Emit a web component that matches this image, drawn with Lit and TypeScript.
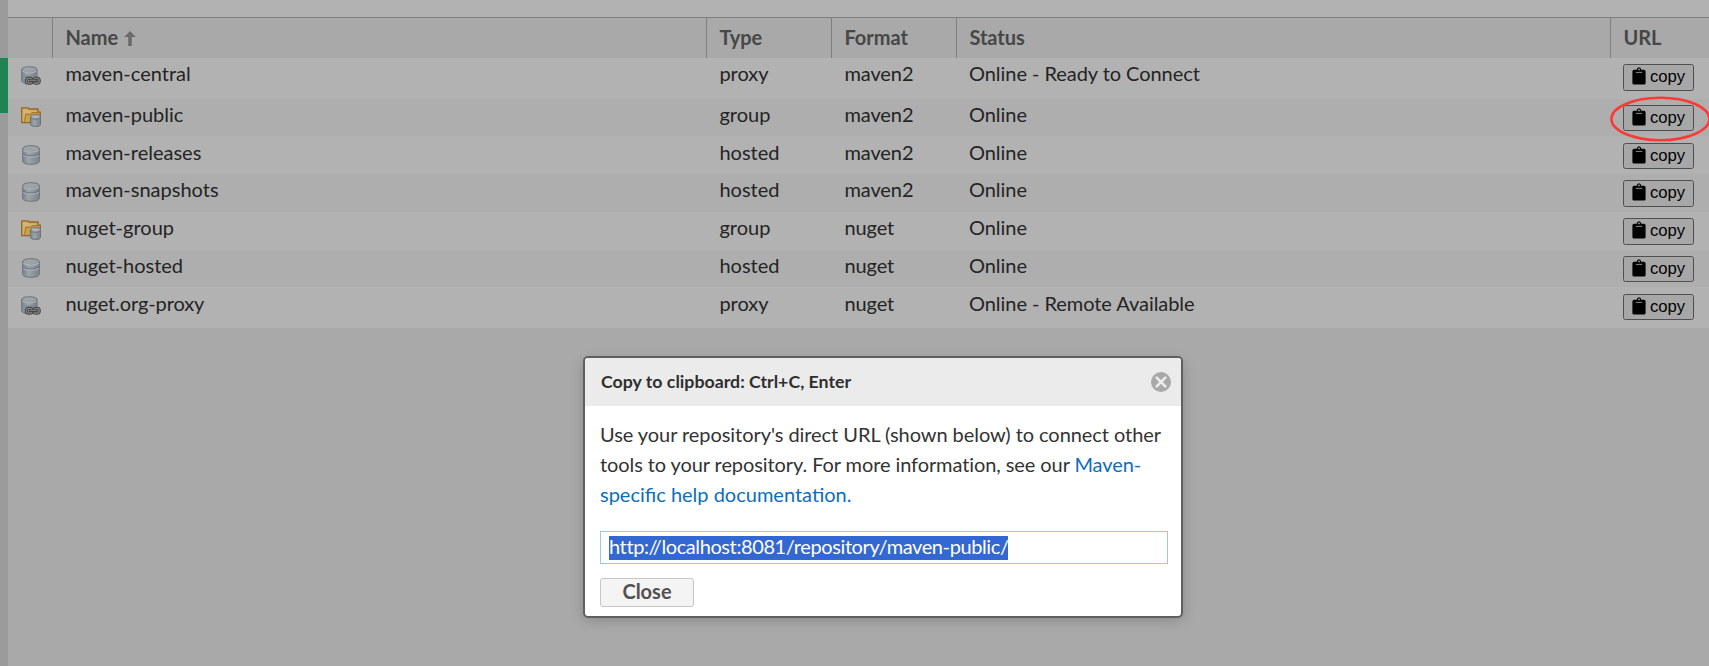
import { LitElement, html, css, svg } from "lit";
import { customElement, property } from "lit/decorators.js";

type Kind = "proxy" | "group" | "hosted";
interface Repo {
  name: string;
  type: Kind;
  format: string;
  status: string;
  size: string;
}

const REPOS: Repo[] = [
  { name: "maven-central", type: "proxy", format: "maven2", status: "Online - Ready to Connect", size: "tall" },
  { name: "maven-public", type: "group", format: "maven2", status: "Online", size: "short" },
  { name: "maven-releases", type: "hosted", format: "maven2", status: "Online", size: "low" },
  { name: "maven-snapshots", type: "hosted", format: "maven2", status: "Online", size: "mid" },
  { name: "nuget-group", type: "group", format: "nuget", status: "Online", size: "mid" },
  { name: "nuget-hosted", type: "hosted", format: "nuget", status: "Online", size: "short" },
  { name: "nuget.org-proxy", type: "proxy", format: "nuget", status: "Online - Remote Available", size: "tall last" },
];

@customElement("repo-icon")
class RepoIcon extends LitElement {
  @property() kind: Kind = "hosted";

  static styles = css`
    :host { display: block; width: 20px; height: 20px; }
    svg { display: block; }
  `;

  private hosted() {
    return svg`
      <path d="M1.6 3.6 Q2.4 .7 10 .7 T18.4 3.6 V16.4 Q17.6 19.3 10 19.3 T1.6 16.4Z" fill="url(#g)" stroke="#70777d"/>
      <ellipse cx="10" cy="3.7" rx="7.4" ry="2.3" fill="#9ca4aa"/>
      <path d="M2.3 5.2 Q5 7.2 10 7.2 T17.7 5.2" fill="none" stroke="#b1b7bc" stroke-width="1.1"/>
      <path d="M1.8 9 Q5 11 10 11 T18.2 9" fill="none" stroke="#6f777e" stroke-width="1.2"/>
      <path d="M2.2 10.4 Q5 12.2 10 12.2 T17.8 10.4" fill="none" stroke="#adb4b9" stroke-width="1"/>`;
  }

  private proxy() {
    return svg`
      <path d="M.6 3.4 Q1.4 .7 8.3 .7 T16 3.4 V14.9 Q15 17.7 8.3 17.7 T.6 14.9Z" fill="url(#g)" stroke="#70777d"/>
      <ellipse cx="8.3" cy="3.5" rx="6.7" ry="2.1" fill="#9ca4aa"/>
      <path d="M1.3 5.1 Q4 7 8.3 7 T15.3 5.1" fill="none" stroke="#b1b7bc"/>
      <path d="M1 9 Q4 10.4 8.3 10.4 T15.6 9" fill="none" stroke="#7c848a"/>
      <g fill="none" stroke="#444" stroke-width="3.2">
        <rect x="5.4" y="12.4" width="5.6" height="4.8" rx="2.2"/>
        <rect x="13" y="12.4" width="5.2" height="4.8" rx="2.2"/>
      </g>
      <g fill="none" stroke="#858585" stroke-width="1.2">
        <rect x="5.4" y="12.3" width="5.6" height="4.8" rx="2.2"/>
        <rect x="13" y="12.3" width="5.2" height="4.8" rx="2.2"/>
      </g>
      <path d="M8.5 14.8 H15.5" stroke="#3c3c3c" stroke-width="2.4"/>
      <path d="M9 14.6 H15" stroke="#8a8a8a" stroke-width=".9"/>`;
  }

  private group() {
    return svg`
      <path d="M.7 15.6 V.9 H7.2 L8.2 2 H17 V5.2 H19.3 V15.6Z" fill="#c9a14b" stroke="#94682c" stroke-width="1.3"/>
      <path d="M1.8 14.5 V2.3 H6.4 L7.6 3.4 H15.8 V5 H10.5 L9.3 6.6 H4.2 V14.5Z" fill="#d2b574"/>
      <path d="M3.6 14.6 L4.6 7.3 H9.8 L11 5.7 H18.3" fill="none" stroke="#a0722c" stroke-width="1"/>
      <path d="M9.5 9.6 Q10 7.6 14.7 7.6 T19.6 9.6 V17.6 Q19 19.5 14.7 19.5 T9.5 17.6Z" fill="url(#g)" stroke="#6a7178"/>
      <ellipse cx="14.6" cy="9.7" rx="4.2" ry="1.4" fill="#aab1b7"/>
      <path d="M10 11.2 Q12 12.4 14.7 12.4 T19.2 11.2" fill="none" stroke="#747c83"/>`;
  }

  render() {
    const art = this.kind === "hosted" ? this.hosted() : this.kind === "proxy" ? this.proxy() : this.group();
    return html`<svg width="20" height="20" viewBox="0 0 20 20">
      <defs><linearGradient id="g"><stop offset="0" stop-color="#7c858c"/><stop offset=".35" stop-color="#9ba4aa"/><stop offset="1" stop-color="#7b848b"/></linearGradient></defs>
      ${art}
    </svg>`;
  }
}

@customElement("copy-button")
class CopyButton extends LitElement {
  static styles = css`
    :host { display: block; height: 27px; }
    button {
      box-sizing: border-box; width: 71px; height: 100%; margin: 0; padding: 0 0 0 8px;
      display: flex; align-items: flex-start; gap: 4px;
      border: 1px solid #505050; border-radius: 2.5px; background: #a7a7a7; color: #000;
      font: 16.67px/24px "Liberation Sans", Arial, sans-serif;
    }
    svg { display: block; margin-top: 2px; flex: none; }
  `;

  render() {
    return html`<button>
      <svg width="14" height="18" viewBox="0 0 14 18">
        <path d="M2 2.8 H4.7 Q5 .3 7 .3 T9.3 2.8 H12 Q13.6 2.8 13.6 4.4 V16 Q13.6 17.5 12 17.5 H2 Q.4 17.5 .4 16 V4.4 Q.4 2.8 2 2.8Z"/>
        <circle cx="7" cy="2.4" r=".9" fill="#a7a7a7"/>
        <path d="M3.8 5.4 H10.2" stroke="#8a8a8a" stroke-width="1"/>
      </svg>
      <span>copy</span>
    </button>`;
  }
}

@customElement("app-root")
class AppRoot extends LitElement {
  static styles = css`
    :host {
      display: block; width: 1709px; height: 666px; overflow: hidden; position: relative;
      font: 20px/24px Lato, "Open Sans", sans-serif; letter-spacing: -0.09px; color: #242424;
    }
    .page { display: flex; height: 100%; background: #a9a9a9; }
    .rail { width: 8px; background: #9b9b9b; padding-top: 58px; box-sizing: border-box; flex: none; }
    .active { height: 55px; background: #1f8352; }
    .main { flex: 1; }
    .toolbar { height: 17px; background: #b2b2b2; }
    .line { display: grid; grid-template-columns: 44px 654px 125px 125px 654px 1fr; }
    .head {
      height: 41px; box-sizing: border-box; border-top: 1px solid #7f7f7f; background: #a9a9a9;
      font-weight: 700; color: #474747; letter-spacing: 0;
    }
    .head > div { padding: 7px 0 0 12.4px; border-left: 1px solid #7f7f7f; display: flex; }
    .head > div:first-child { border: 0; }
    .arrow { margin: 6px 0 0 6px; }
    .row { background: #b2b2b2; height: 38px; }
    .row:nth-child(odd) { background: #aeaeae; }
    .row > div { padding: 3px 0 0 13.4px; }
    .row > .type { letter-spacing: 0; }
    .row > .name { letter-spacing: 0; }
    .row > .icon { padding: 8px 0 0 13px; }
    .row > .url { padding-top: 6px; padding-left: 13px; }
    .row > .status { padding-left: 13px; letter-spacing: -0.05px; }
    .tall { height: 41px; }
    .short { height: 37px; }
    .low > div, .last > div { padding-top: 4px; }
    .low > .icon, .last > .icon { padding-top: 9px; }
    .low > .url, .last > .url { padding-top: 7px; }
    .last > .name { letter-spacing: -0.1px; }
    .short copy-button, .low copy-button, .last copy-button { height: 26px; }
    .mark { position: absolute; left: 1609px; top: 95px; }
    .dialog {
      position: absolute; left: 583px; top: 356px; box-sizing: border-box; width: 600px; height: 262px;
      border: 2px solid #5f5f5f; border-radius: 5px; background: #fff; overflow: hidden; color: #333;
    }
    .shadow {
      position: absolute; left: 583px; top: 360px; width: 600px; height: 258px; border-radius: 5px;
      box-shadow: 0 2px 14px rgba(0, 0, 0, .2);
    }
    .title {
      height: 48px; background: #ebebeb; display: flex; justify-content: space-between;
      padding: 0 10px 0 16px; align-items: center;
      font-size: 17.75px; font-weight: 700; letter-spacing: 0; color: #2f2f2f;
    }
    .title span { padding-bottom: 2px; }
    .body { padding: 13px 13px 0 15px; }
    .body p { margin: 0; line-height: 30px; white-space: nowrap; letter-spacing: -0.06px; }
    .body .second { letter-spacing: -0.09px; }
    .body .third { letter-spacing: 0; }
    .body a { color: #0a6ebd; }
    .field {
      box-sizing: border-box; height: 33px; margin-top: 22px; border: 1px solid #99c8e9; padding: 4px 8px;
      display: flex; color: #fff; letter-spacing: -0.4px;
    }
    .picked { background: #3367d1; width: 399px; white-space: nowrap; height: 24px; line-height: 21px; }
    .close {
      box-sizing: border-box; display: block; width: 94px; height: 29px; margin: 14px 0 0; padding: 0;
      border: 1px solid #c6c6c6; border-radius: 3px; background: #f4f4f4; color: #525252;
      font: 700 20px/24px Lato, sans-serif;
    }
    .close span { display: block; margin-top: -3px; }
  `;

  render() {
    return html`
      <div class="page">
        <div class="rail"><div class="active"></div></div>
        <div class="main">
          <div class="toolbar"></div>
          <div>
            <div class="line head">
              <div></div>
              <div>Name<svg class="arrow" width="12" height="15" viewBox="0 0 12 15"><path d="M6 0 L11.8 6 H7.8 V15 H4.2 V6 H.2Z" fill="#6a6a6a"/></svg></div>
              <div>Type</div>
              <div>Format</div>
              <div>Status</div>
              <div>URL</div>
            </div>
            ${REPOS.map((r) => html`
              <div class="line row ${r.size}">
                <div class="icon"><repo-icon .kind=${r.type}></repo-icon></div>
                <div class="name">${r.name}</div>
                <div class="type">${r.type}</div>
                <div>${r.format}</div>
                <div class="status">${r.status}</div>
                <div class="url"><copy-button></copy-button></div>
              </div>`)}
          </div>
        </div>
      </div>
      <svg class="mark" width="102" height="48" viewBox="0 0 102 48">
        <ellipse cx="51.4" cy="24" rx="49" ry="21.2" fill="none" stroke="#fc3a35" stroke-width="2.5"/>
      </svg>
      <div class="shadow"></div>
      <div class="dialog">
        <div class="title">
          <span>Copy to clipboard: Ctrl+C, Enter</span>
          <svg width="20" height="20" viewBox="0 0 20 20"><circle cx="10" cy="10" r="10" fill="#a9a9a9"/><path d="M5.7 5.7 L14.3 14.3 M14.3 5.7 L5.7 14.3" stroke="#ececec" stroke-width="2.6" stroke-linecap="round"/></svg>
        </div>
        <div class="body">
          <p>Use your repository's direct URL (shown below) to connect other</p>
          <p class="second">tools to your repository. For more information, see our <a>Maven-</a></p>
          <p class="third"><a>specific help documentation.</a></p>
          <div class="field"><span class="picked">http://localhost:8081/repository/maven-public/</span></div>
          <button class="close"><span>Close</span></button>
        </div>
      </div>`;
  }
}
